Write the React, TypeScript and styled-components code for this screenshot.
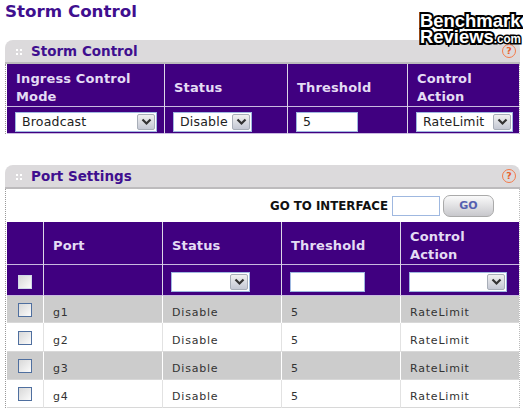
import React from 'react'
import styled, { createGlobalStyle } from 'styled-components'

const GlobalStyle = createGlobalStyle`
  html, body {
    margin: 0;
    padding: 0;
    background: #fff;
    font-family: "DejaVu Sans", Verdana, sans-serif;
  }
`

const Page = styled.div`
  position: relative;
  width: 524px;
  height: 410px;
  overflow: hidden;
  padding: 0 4px 0 5px;
  box-sizing: border-box;
`

const Title = styled.h1`
  margin: 0;
  height: 40px;
  padding-top: 1px;
  box-sizing: border-box;
  font-size: 16.7px;
  line-height: 20px;
  font-weight: bold;
  color: #3f0f8f;
`

const Watermark = styled.div`
  position: absolute;
  left: 420px;
  top: 13px;
  width: 101px;
  color: #fff;
  font-family: "Liberation Sans", Arial, sans-serif;
  font-weight: bold;
  font-size: 19px;
  line-height: 15.5px;
  white-space: nowrap;
  -webkit-text-stroke: 4px #000;
  paint-order: stroke fill;

  span {
    display: block;
    transform-origin: left center;
    transform: scaleX(0.97);
  }

  small {
    font-size: 12px;
    -webkit-text-stroke: 3px #000;
  }
`

const Panel = styled.section<{ $gap?: number }>`
  margin-bottom: ${p => p.$gap ?? 0}px;
`

const PanelHead = styled.div`
  display: flex;
  align-items: center;
  height: 24px;
  box-sizing: border-box;
  padding: 0 4px 0 10px;
  background: #dcdadc;
  border-radius: 8px 8px 0 0;
  border-bottom: 2px solid #bdbbbd;
`

const Grip = styled.span`
  width: 7px;
  height: 7px;
  margin-right: 9px;
  background-image: radial-gradient(#fff 1px, transparent 1.2px);
  background-size: 4px 4px;
`

const PanelTitle = styled.h2`
  flex: 1;
  margin: 0;
  font-size: 13.5px;
  font-weight: bold;
  color: #3f0f8f;
`

const Help = styled.span`
  width: 14px;
  height: 14px;
  box-sizing: border-box;
  border: 1.5px solid #f47a4a;
  border-radius: 50%;
  color: #e8602c;
  font-size: 9.5px;
  font-weight: bold;
  line-height: 11px;
  text-align: center;
`

const Body = styled.div`
  border-left: 1px dotted #999;
  border-right: 1px dotted #bbb;
  padding-left: 1px;
`

const Row = styled.div<{ $cols: string; $h: number; $bg: string; $line: string }>`
  --line: ${p => p.$line};
  display: grid;
  grid-template-columns: ${p => p.$cols};
  height: ${p => p.$h}px;
  background: ${p => p.$bg};
  box-shadow: inset 0 -1px 0 ${p => (p.$bg === '#400080' ? '#c9b9e0' : '#d8d8d8')};
`

const Cell = styled.div<{ $center?: boolean }>`
  display: flex;
  align-items: center;
  min-width: 0;
  box-sizing: border-box;
  padding-left: ${p => (p.$center ? 0 : '8px')};
  justify-content: ${p => (p.$center ? 'center' : 'flex-start')};
  border-right: 1px solid var(--line);
  &:last-child {
    border-right: none;
  }
`

const HeadCell = styled(Cell)`
  padding-left: 9px;
  padding-top: 4px;
  font-size: 13px;
  line-height: 18px;
  letter-spacing: 0.15px;
  font-weight: bold;
  color: #e4dcf4;
`

const DataCell = styled(Cell)`
  padding-left: 9px;
  padding-top: 5px;
  font-size: 11px;
  color: #333;
  letter-spacing: 0.8px;
`

const SelectBox = styled.div<{ $w: number }>`
  display: flex;
  align-items: center;
  justify-content: space-between;
  width: ${p => p.$w}px;
  height: 20px;
  box-sizing: border-box;
  padding: 1px 1px 1px 6px;
  background: #fff;
  border: 1px solid #9fb8e0;
  font-size: 12.5px;
  letter-spacing: 0.2px;
  color: #222;
  overflow: hidden;
`

const Arrow = styled.span`
  display: flex;
  align-items: center;
  justify-content: center;
  flex: none;
  width: 18px;
  height: 16px;
  background: linear-gradient(#f0f0f0, #c4c8d4);
  border: 1px solid #a8aeb8;
  border-radius: 2px;
  box-sizing: border-box;
`

const TextBox = styled.div<{ $w: number }>`
  width: ${p => p.$w}px;
  height: 20px;
  box-sizing: border-box;
  padding: 0 6px;
  background: #fff;
  border: 1px solid #9fb8e0;
  font-size: 12.5px;
  line-height: 18px;
  color: #222;
`

const Check = styled.span<{ $light?: boolean }>`
  width: 14px;
  height: 14px;
  box-sizing: border-box;
  border: 1px solid ${p => (p.$light ? '#d0d8e8' : '#4f6f9f')};
  background: linear-gradient(135deg, #d8d8d8, #fbfbfb);
`

const InputRow = styled(Row)<{ $top: number }>`
  > div {
    padding-top: ${p => p.$top}px;
  }
`

const GotoBar = styled.div`
  display: flex;
  align-items: center;
  justify-content: flex-end;
  height: 33px;
  padding-right: 25px;
  box-sizing: border-box;
`

const GotoLabel = styled.span`
  margin-right: 4px;
  font-size: 11.8px;
  font-weight: bold;
  color: #111;
`

const GoButton = styled.button`
  width: 51px;
  height: 22px;
  margin-left: 3px;
  padding: 0;
  background: linear-gradient(#fafafa, #c8c8cc);
  border: 1px solid #aaa;
  border-radius: 7px;
  font-family: inherit;
  font-size: 11px;
  font-weight: bold;
  color: #5560b0;
`

const Chevron = () => (
  <svg width="11" height="8" viewBox="0 0 11 8">
    <path d="M1.5 1.5 L5.5 5.5 L9.5 1.5" fill="none" stroke="#333" strokeWidth="2.2" />
  </svg>
)

const Select = ({ w, value }: { w: number; value?: string }) => (
  <SelectBox $w={w}>
    <span>{value}</span>
    <Arrow><Chevron /></Arrow>
  </SelectBox>
)

const PURPLE = '#400080'
const HEAD_LINE = '#dcd6e8'
const stormCols = '158px 123px 120px 1fr'
const portCols = '37px 119px 119px 119px 1fr'
const ports: [string, number, string, string][] = [
  ['g1', 27, '#cccccc', '#ffffff'],
  ['g2', 29, '#ffffff', '#e2e2e2'],
  ['g3', 28, '#cccccc', '#ffffff'],
  ['g4', 28, '#ffffff', '#e2e2e2'],
]

export default function App() {
  return (
    <Page>
      <GlobalStyle />
      <Title>Storm Control</Title>

      <Panel $gap={31}>
        <PanelHead>
          <Grip />
          <PanelTitle>Storm Control</PanelTitle>
          <Help>?</Help>
        </PanelHead>
        <Body>
          <Row $cols={stormCols} $h={43} $bg={PURPLE} $line={HEAD_LINE}>
            <HeadCell>Ingress Control<br />Mode</HeadCell>
            <HeadCell>Status</HeadCell>
            <HeadCell>Threshold</HeadCell>
            <HeadCell>Control<br />Action</HeadCell>
          </Row>
          <InputRow $top={2} $cols={stormCols} $h={27} $bg={PURPLE} $line={HEAD_LINE}>
            <Cell><Select w={142} value="Broadcast" /></Cell>
            <Cell><Select w={79} value="Disable" /></Cell>
            <Cell><TextBox $w={62}>5</TextBox></Cell>
            <Cell><Select w={97} value="RateLimit" /></Cell>
          </InputRow>
        </Body>
      </Panel>

      <Panel>
        <PanelHead>
          <Grip />
          <PanelTitle>Port Settings</PanelTitle>
          <Help>?</Help>
        </PanelHead>
        <Body>
          <GotoBar>
            <GotoLabel>GO TO INTERFACE</GotoLabel>
            <TextBox $w={48} />
            <GoButton>GO</GoButton>
          </GotoBar>
          <Row $cols={portCols} $h={43} $bg={PURPLE} $line={HEAD_LINE}>
            <HeadCell />
            <HeadCell>Port</HeadCell>
            <HeadCell>Status</HeadCell>
            <HeadCell>Threshold</HeadCell>
            <HeadCell>Control<br />Action</HeadCell>
          </Row>
          <InputRow $top={3} $cols={portCols} $h={31} $bg={PURPLE} $line={HEAD_LINE}>
            <Cell $center><Check $light /></Cell>
            <Cell />
            <Cell><Select w={79} /></Cell>
            <Cell><TextBox $w={75} /></Cell>
            <Cell><Select w={98} /></Cell>
          </InputRow>
          {ports.map(([name, h, bg, line]) => (
            <Row key={name} $cols={portCols} $h={h} $bg={bg} $line={line}>
              <Cell $center><Check /></Cell>
              <DataCell>{name}</DataCell>
              <DataCell>Disable</DataCell>
              <DataCell>5</DataCell>
              <DataCell>RateLimit</DataCell>
            </Row>
          ))}
        </Body>
      </Panel>

      <Watermark>
        <span>Benchmark</span>
        <span>Reviews<small>.com</small></span>
      </Watermark>
    </Page>
  )
}
